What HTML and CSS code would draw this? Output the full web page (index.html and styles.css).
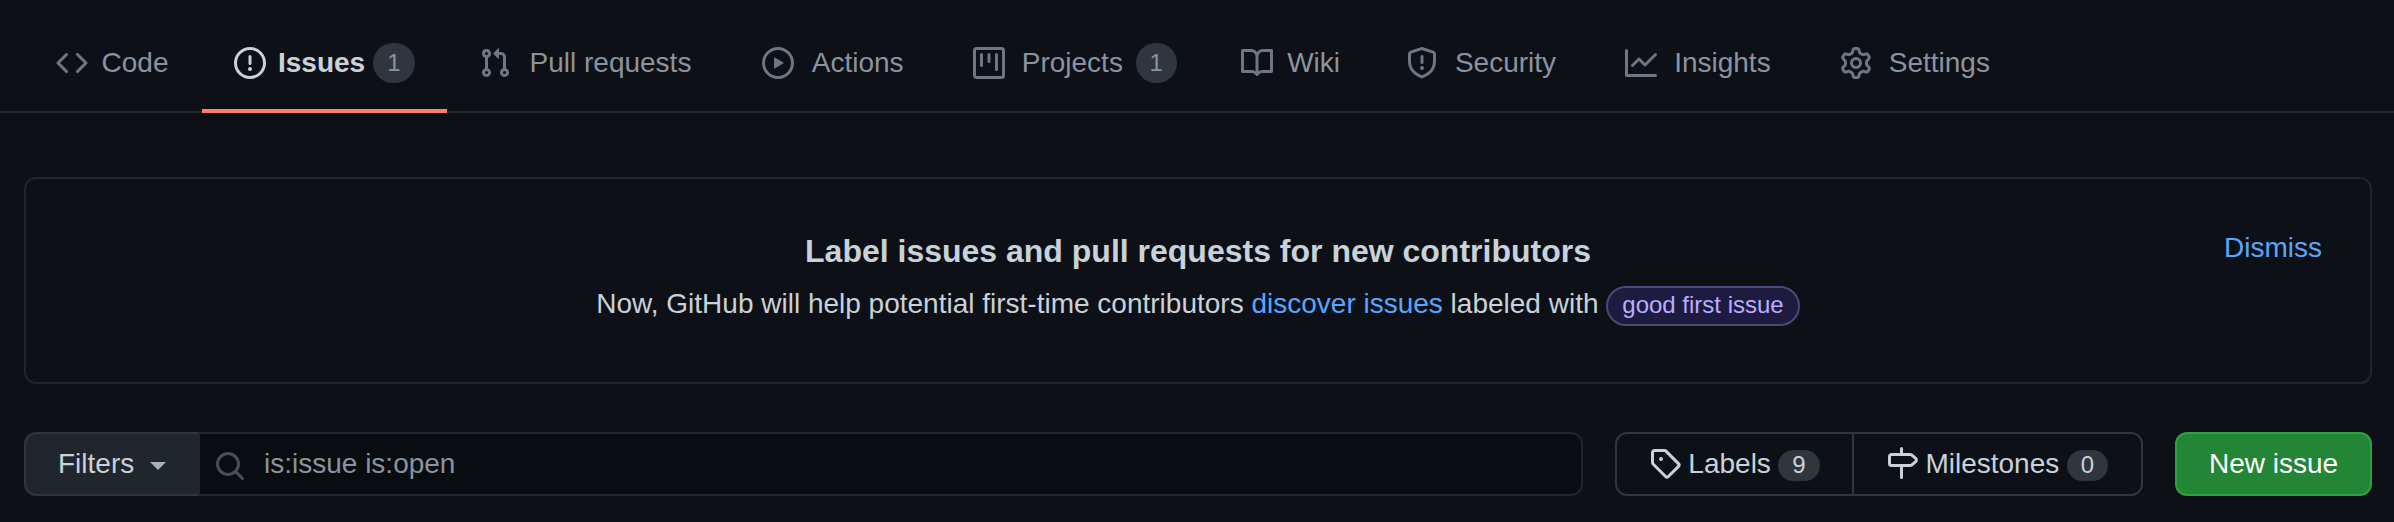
FILE: index.html
```html
<!DOCTYPE html>
<html lang="en">
<head>
<meta charset="utf-8">
<title>Issues</title>
<link rel="stylesheet" href="styles.css">
</head>
<body>
<nav class="tabs">
  <a class="tab"><svg class="icon" viewBox="0 0 16 16"><path fill-rule="evenodd" d="M4.72 3.22a.75.75 0 011.06 1.06L2.06 8l3.72 3.72a.75.75 0 11-1.06 1.06L.47 8.53a.75.75 0 010-1.06l4.25-4.25zm6.56 0a.75.75 0 10-1.06 1.06L13.94 8l-3.72 3.72a.75.75 0 101.06 1.06l4.25-4.25a.75.75 0 000-1.06l-4.25-4.25z"/></svg><span class="tab-text" data-content="Code">Code</span></a>
  <a class="tab selected"><svg class="icon" viewBox="0 0 16 16"><path fill-rule="evenodd" d="M8 1.5a6.5 6.5 0 100 13 6.5 6.5 0 000-13zM0 8a8 8 0 1116 0A8 8 0 010 8zm9 3a1 1 0 11-2 0 1 1 0 012 0zm-.25-6.25a.75.75 0 00-1.5 0v3.5a.75.75 0 001.5 0v-3.5z"/></svg><span class="tab-text" data-content="Issues">Issues</span><span class="counter">1</span></a>
  <a class="tab"><svg class="icon" viewBox="0 0 16 16"><path fill-rule="evenodd" d="M7.177 3.073L9.573.677A.25.25 0 0110 .854v4.792a.25.25 0 01-.427.177L7.177 3.427a.25.25 0 010-.354zM3.75 2.5a.75.75 0 100 1.5.75.75 0 000-1.5zm-2.25.75a2.25 2.25 0 113 2.122v5.256a2.251 2.251 0 11-1.5 0V5.372A2.25 2.25 0 011.5 3.25zM11 2.5h-1V4h1a1 1 0 011 1v5.628a2.251 2.251 0 101.5 0V5A2.5 2.5 0 0011 2.5zm1 10.25a.75.75 0 111.5 0 .75.75 0 01-1.5 0zM3.75 12a.75.75 0 100 1.5.75.75 0 000-1.5z"/></svg><span class="tab-text" data-content="Pull requests">Pull requests</span></a>
  <a class="tab"><svg class="icon" viewBox="0 0 16 16"><path fill-rule="evenodd" d="M1.5 8a6.5 6.5 0 1113 0 6.5 6.5 0 01-13 0zM8 0a8 8 0 100 16A8 8 0 008 0zM6.379 5.227A.25.25 0 006 5.442v5.117a.25.25 0 00.379.214l4.264-2.559a.25.25 0 000-.428L6.379 5.227z"/></svg><span class="tab-text" data-content="Actions">Actions</span></a>
  <a class="tab"><svg class="icon" viewBox="0 0 16 16"><path fill-rule="evenodd" d="M1.75 0A1.75 1.75 0 000 1.75v12.5C0 15.216.784 16 1.75 16h12.5A1.75 1.75 0 0016 14.25V1.75A1.75 1.75 0 0014.25 0H1.75zM1.5 1.75a.25.25 0 01.25-.25h12.5a.25.25 0 01.25.25v12.5a.25.25 0 01-.25.25H1.75a.25.25 0 01-.25-.25V1.75zM11.75 3a.75.75 0 00-.75.75v7.5a.75.75 0 001.5 0v-7.5a.75.75 0 00-.75-.75zm-8.25.75a.75.75 0 011.5 0v5.5a.75.75 0 01-1.5 0v-5.5zM8 3a.75.75 0 00-.75.75v3.5a.75.75 0 001.5 0v-3.5A.75.75 0 008 3z"/></svg><span class="tab-text" data-content="Projects">Projects</span><span class="counter">1</span></a>
  <a class="tab"><svg class="icon" viewBox="0 0 16 16"><path fill-rule="evenodd" d="M0 1.75A.75.75 0 01.75 1h4.253c1.227 0 2.317.59 3 1.501A3.744 3.744 0 0111.006 1h4.245a.75.75 0 01.75.75v10.5a.75.75 0 01-.75.75h-4.507a2.25 2.25 0 00-1.591.659l-.622.621a.75.75 0 01-1.06 0l-.622-.621A2.25 2.25 0 005.258 13H.75a.75.75 0 01-.75-.75V1.75zm8.755 3a2.25 2.25 0 012.25-2.25H14.5v9h-3.757c-.71 0-1.4.201-1.992.572l.004-7.322zm-1.504 7.324l.004-5.073-.002-2.253A2.25 2.25 0 005.003 2.5H1.5v9h3.757a3.75 3.75 0 011.994.574z"/></svg><span class="tab-text" data-content="Wiki">Wiki</span></a>
  <a class="tab"><svg class="icon" viewBox="0 0 16 16"><path fill-rule="evenodd" d="M7.467.133a1.75 1.75 0 011.066 0l5.25 1.68A1.75 1.75 0 0115 3.48V7c0 1.566-.32 3.182-1.303 4.682-.983 1.498-2.585 2.813-5.032 3.855a1.7 1.7 0 01-1.33 0c-2.447-1.042-4.049-2.357-5.032-3.855C1.32 10.182 1 8.566 1 7V3.48a1.75 1.75 0 011.217-1.667l5.25-1.68zm.61 1.429a.25.25 0 00-.153 0l-5.25 1.68a.25.25 0 00-.174.238V7c0 1.358.275 2.666 1.057 3.86.784 1.194 2.121 2.34 4.366 3.297a.2.2 0 00.154 0c2.245-.956 3.582-2.104 4.366-3.298C13.225 9.666 13.5 8.36 13.5 7V3.48a.25.25 0 00-.174-.237l-5.25-1.68zM9 10.5a1 1 0 11-2 0 1 1 0 012 0zm-.25-5.75a.75.75 0 10-1.5 0v3a.75.75 0 001.5 0v-3z"/></svg><span class="tab-text" data-content="Security">Security</span></a>
  <a class="tab"><svg class="icon" viewBox="0 0 16 16"><path fill-rule="evenodd" d="M1.5 1.75a.75.75 0 00-1.5 0v12.5c0 .414.336.75.75.75h14.5a.75.75 0 000-1.5H1.5V1.75zm14.28 2.53a.75.75 0 00-1.06-1.06L10 7.94 7.53 5.47a.75.75 0 00-1.06 0L3.22 8.72a.75.75 0 001.06 1.06L7 7.06l2.47 2.47a.75.75 0 001.06 0l5.25-5.25z"/></svg><span class="tab-text" data-content="Insights">Insights</span></a>
  <a class="tab"><svg class="icon" viewBox="0 0 16 16"><path fill-rule="evenodd" d="M7.429 1.525a6.593 6.593 0 011.142 0c.036.003.108.036.137.146l.289 1.105c.147.56.55.967.997 1.189.174.086.341.183.501.29.417.278.97.423 1.53.27l1.102-.303c.11-.03.175.016.195.046.219.31.41.641.573.989.014.031.022.11-.059.19l-.815.806c-.411.406-.562.957-.53 1.456a4.588 4.588 0 010 .582c-.032.499.119 1.05.53 1.456l.815.806c.08.08.073.159.059.19a6.494 6.494 0 01-.573.99c-.02.029-.086.074-.195.045l-1.103-.303c-.559-.153-1.112-.008-1.529.27-.16.107-.327.204-.5.29-.449.222-.851.628-.998 1.189l-.289 1.105c-.029.11-.101.143-.137.146a6.613 6.613 0 01-1.142 0c-.036-.003-.108-.037-.137-.146l-.289-1.105c-.147-.56-.55-.967-.997-1.189a4.502 4.502 0 01-.501-.29c-.417-.278-.97-.423-1.53-.27l-1.102.303c-.11.03-.175-.016-.195-.046a6.492 6.492 0 01-.573-.989c-.014-.031-.022-.11.059-.19l.815-.806c.411-.406.562-.957.53-1.456a4.587 4.587 0 010-.582c.032-.499-.119-1.05-.53-1.456l-.815-.806c-.08-.08-.073-.159-.059-.19a6.44 6.44 0 01.573-.99c.02-.029.086-.075.195-.045l1.103.303c.559.153 1.112.008 1.529-.27.16-.107.327-.204.5-.29.449-.222.851-.628.998-1.189l.289-1.105c.029-.11.101-.143.137-.146zM8 0c-.236 0-.47.01-.701.03-.743.065-1.29.615-1.458 1.261l-.29 1.106c-.017.066-.078.158-.211.224a5.994 5.994 0 00-.668.386c-.123.082-.233.09-.3.071L3.27 2.776c-.644-.177-1.392.02-1.82.63a7.977 7.977 0 00-.704 1.217c-.315.675-.111 1.422.363 1.891l.815.806c.05.048.098.147.088.294a6.084 6.084 0 000 .772c.01.147-.038.246-.088.294l-.815.806c-.474.469-.678 1.216-.363 1.891.2.428.436.835.704 1.218.428.609 1.176.806 1.82.63l1.103-.303c.066-.019.176-.011.299.071.213.143.436.272.668.386.133.066.194.158.212.224l.289 1.106c.169.646.715 1.196 1.458 1.26a8.094 8.094 0 001.402 0c.743-.064 1.29-.614 1.458-1.26l.29-1.106c.017-.066.078-.158.211-.224a5.98 5.98 0 00.668-.386c.123-.082.233-.09.3-.071l1.102.302c.644.177 1.392-.02 1.82-.63.268-.382.505-.789.704-1.217.315-.675.111-1.422-.364-1.891l-.814-.806c-.05-.048-.098-.147-.088-.294a6.1 6.1 0 000-.772c-.01-.147.039-.246.088-.294l.814-.806c.475-.469.679-1.216.364-1.891a7.992 7.992 0 00-.704-1.218c-.428-.609-1.176-.806-1.82-.63l-1.103.303c-.066.019-.176.011-.299-.071a5.991 5.991 0 00-.668-.386c-.133-.066-.194-.158-.212-.224L10.16 1.29C9.99.645 9.444.095 8.701.031A8.094 8.094 0 008 0zm1.5 8a1.5 1.5 0 11-3 0 1.5 1.5 0 013 0zM11 8a3 3 0 11-6 0 3 3 0 016 0z"/></svg><span class="tab-text" data-content="Settings">Settings</span></a>
</nav>
<main class="content">
  <section class="banner">
    <a class="dismiss">Dismiss</a>
    <h2 class="banner-title">Label issues and pull requests for new contributors</h2>
    <p class="banner-text">Now, GitHub will help potential first-time contributors <a class="link">discover issues</a> labeled with <span class="label">good first issue</span></p>
  </section>
  <div class="toolbar">
    <div class="search">
      <button class="filters">Filters<span class="caret"></span></button>
      <div class="field"><svg class="icon" viewBox="0 0 16 16"><path fill-rule="evenodd" d="M11.5 7a4.499 4.499 0 11-8.998 0A4.499 4.499 0 0111.5 7zm-.82 4.74a6 6 0 111.06-1.06l3.04 3.04a.75.75 0 11-1.06 1.06l-3.04-3.04z"/></svg><span class="query">is:issue is:open</span></div>
    </div>
    <div class="subnav">
      <a class="subnav-item"><svg class="icon" viewBox="0 0 16 16"><path fill-rule="evenodd" d="M2.5 7.775V2.75a.25.25 0 01.25-.25h5.025a.25.25 0 01.177.073l6.25 6.25a.25.25 0 010 .354l-5.025 5.025a.25.25 0 01-.354 0l-6.25-6.25a.25.25 0 01-.073-.177zm-1.5 0V2.75C1 1.784 1.784 1 2.75 1h5.025c.464 0 .91.184 1.238.513l6.25 6.25a1.75 1.75 0 010 2.474l-5.026 5.026a1.75 1.75 0 01-2.474 0l-6.25-6.25A1.75 1.75 0 011 7.775zM6 5a1 1 0 100 2 1 1 0 000-2z"/></svg>Labels<span class="badge">9</span></a>
      <a class="subnav-item"><svg class="icon" viewBox="0 0 16 16"><path fill-rule="evenodd" d="M7.75 0a.75.75 0 01.75.75V3h3.634c.414 0 .814.147 1.13.414l2.07 1.75a1.75 1.75 0 010 2.672l-2.07 1.75a1.75 1.75 0 01-1.13.414H8.5v5.25a.75.75 0 11-1.5 0V10H2.75A1.75 1.75 0 011 8.25v-3.5C1 3.784 1.784 3 2.75 3H7V.75A.75.75 0 017.75 0zm0 8.5h4.384a.25.25 0 00.161-.06l2.07-1.75a.25.25 0 000-.38l-2.07-1.75a.25.25 0 00-.161-.06H2.75a.25.25 0 00-.25.25v3.5c0 .138.112.25.25.25h5z"/></svg>Milestones<span class="badge">0</span></a>
    </div>
    <button class="new-issue">New issue</button>
  </div>
</main>
</body>
</html>
```

FILE: styles.css
```css
* { box-sizing: border-box; }
body {
  margin: 0;
  background: #0d1117;
  color: #c9d1d9;
  font: 28px/42px "Liberation Sans", Arial, sans-serif;
  overflow: hidden;
}
button { font: inherit; margin: 0; }
.icon { width: 32px; height: 32px; fill: currentColor; flex: none; display: block; }

.tabs {
  display: flex;
  height: 113px;
  padding: 13px 24px 0;
  box-shadow: inset 0 -2px 0 #21262d;
}
.tab {
  display: flex;
  align-items: center;
  padding: 4px 32px 0;
  color: #8b949e;
  border-bottom: 4px solid transparent;
  white-space: nowrap;
}
.tab .icon { color: #6e7681; margin-right: 12px; }
.tab-text { text-align: center; height: 42px; }
/* Reserves the bold width so selecting a tab does not shift its neighbours */
.tab-text::after {
  content: attr(data-content);
  display: block;
  height: 0;
  overflow: hidden;
  visibility: hidden;
  font-weight: 700;
}
.tab.selected { border-bottom-color: #ff7f6a; }
.tab.selected .icon { color: #c9d1d9; }
.tab.selected .tab-text { color: #c9d1d9; font-weight: 700; }
.counter {
  margin-left: 8px;
  height: 40px;
  padding: 0 12px;
  border: 2px solid transparent;
  border-radius: 40px;
  background: #30363d;
  background-clip: border-box;
  color: #8b949e;
  font-size: 24px;
  line-height: 36px;
}

.content { padding: 64px 22px 0 24px; }
.banner {
  position: relative;
  height: 207px;
  padding: 48px 0 0;
  border: 2px solid #21262d;
  border-radius: 12px;
  text-align: center;
}
.banner-title { margin: 0; font-size: 32px; line-height: 48px; }
.banner-text { margin: 8px 0 0; line-height: 42px; }
.link, .dismiss { color: #58a6ff; }
.dismiss { position: absolute; top: 48px; right: 48px; }
.label {
  display: inline-block;
  height: 40px;
  padding: 0 14px;
  border: 2px solid #4e4777;
  border-radius: 40px;
  background: #1e1b41;
  color: #b9aeff;
  font-size: 24px;
  line-height: 34px;
}

.toolbar { display: flex; margin-top: 48px; height: 64px; }
.search { display: flex; flex: 1; }
.filters {
  display: flex;
  align-items: center;
  width: 176px;
  padding: 0 0 0 32px;
  border: 2px solid #30363d;
  border-right-color: #21262d;
  border-radius: 12px 0 0 12px;
  background: #21262d;
  color: #c9d1d9;
}
.caret {
  margin: 4px 0 0 16px;
  border: 8px solid transparent;
  border-top-color: #a9b0b8;
  border-bottom: 0;
}
.field {
  display: flex;
  align-items: center;
  flex: 1;
  padding-left: 14px;
  border: 2px solid #21262d;
  border-left: 0;
  border-radius: 0 12px 12px 0;
  background: #090c10;
}
.field .icon { color: #484f58; margin: 4px 18px 0 0; }
.query { color: #8b949e; }
.subnav { display: flex; margin: 0 32px; }
.subnav-item {
  display: flex;
  align-items: center;
  padding: 0 32px;
  border: 2px solid #30363d;
}
.subnav-item:first-child { border-radius: 12px 0 0 12px; }
.subnav-item:last-child { border-left: 0; border-radius: 0 12px 12px 0; padding-right: 33px; }
.subnav-item .icon { margin: 0 7.8px 2px 0; }
.badge {
  margin: 3px 0 0 7.4px;
  height: 31px;
  padding: 0 14px;
  border-radius: 31px;
  background: #30363d;
  font-size: 24px;
  line-height: 30px;
}
.new-issue {
  width: 197px;
  padding: 0;
  border: 2px solid #2ea043;
  border-radius: 12px;
  background: #238636;
  color: #fff;
}
```
